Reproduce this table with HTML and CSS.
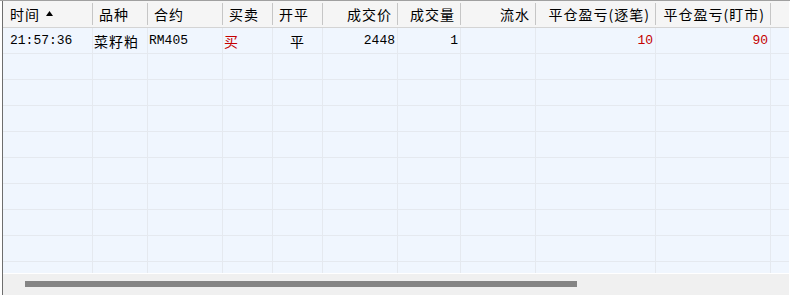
FILE: index.html
```html
<!DOCTYPE html>
<html lang="zh-CN">
<head>
<meta charset="utf-8">
<title>成交记录</title>
<link rel="stylesheet" href="styles.css">
</head>
<body>
<div class="frame">
  <div class="grid">
    <div class="head">
      <div class="hc w1 first">时间<svg class="sort" width="7" height="5" viewBox="0 0 7 5"><polygon points="3.5,0 7,5 0,5" fill="#000"/></svg></div>
      <div class="hc w2">品种</div>
      <div class="hc w3">合约</div>
      <div class="hc w4">买卖</div>
      <div class="hc w5">开平</div>
      <div class="hc w6 r">成交价</div>
      <div class="hc w7 r">成交量</div>
      <div class="hc w8 r">流水</div>
      <div class="hc w9 r">平仓盈亏(逐笔)</div>
      <div class="hc w10 r">平仓盈亏(盯市)</div>
      <div class="hfill"></div>
    </div>
    <div class="body">
      <div class="row">
        <div class="c w1 time">21:57:36</div>
        <div class="c w2 cjk">菜籽粕</div>
        <div class="c w3">RM405</div>
        <div class="c w4 cjk red">买</div>
        <div class="c w5 cjk mid">平</div>
        <div class="c w6 num">2448</div>
        <div class="c w7 num">1</div>
        <div class="c w8 num"></div>
        <div class="c w9 num red">10</div>
        <div class="c w10 num red">90</div>
        <div class="fill"></div>
      </div>
      <div class="row"><div class="c w1"></div><div class="c w2"></div><div class="c w3"></div><div class="c w4"></div><div class="c w5"></div><div class="c w6"></div><div class="c w7"></div><div class="c w8"></div><div class="c w9"></div><div class="c w10"></div><div class="fill"></div></div>
      <div class="row"><div class="c w1"></div><div class="c w2"></div><div class="c w3"></div><div class="c w4"></div><div class="c w5"></div><div class="c w6"></div><div class="c w7"></div><div class="c w8"></div><div class="c w9"></div><div class="c w10"></div><div class="fill"></div></div>
      <div class="row"><div class="c w1"></div><div class="c w2"></div><div class="c w3"></div><div class="c w4"></div><div class="c w5"></div><div class="c w6"></div><div class="c w7"></div><div class="c w8"></div><div class="c w9"></div><div class="c w10"></div><div class="fill"></div></div>
      <div class="row"><div class="c w1"></div><div class="c w2"></div><div class="c w3"></div><div class="c w4"></div><div class="c w5"></div><div class="c w6"></div><div class="c w7"></div><div class="c w8"></div><div class="c w9"></div><div class="c w10"></div><div class="fill"></div></div>
      <div class="row"><div class="c w1"></div><div class="c w2"></div><div class="c w3"></div><div class="c w4"></div><div class="c w5"></div><div class="c w6"></div><div class="c w7"></div><div class="c w8"></div><div class="c w9"></div><div class="c w10"></div><div class="fill"></div></div>
      <div class="row"><div class="c w1"></div><div class="c w2"></div><div class="c w3"></div><div class="c w4"></div><div class="c w5"></div><div class="c w6"></div><div class="c w7"></div><div class="c w8"></div><div class="c w9"></div><div class="c w10"></div><div class="fill"></div></div>
      <div class="row"><div class="c w1"></div><div class="c w2"></div><div class="c w3"></div><div class="c w4"></div><div class="c w5"></div><div class="c w6"></div><div class="c w7"></div><div class="c w8"></div><div class="c w9"></div><div class="c w10"></div><div class="fill"></div></div>
      <div class="row"><div class="c w1"></div><div class="c w2"></div><div class="c w3"></div><div class="c w4"></div><div class="c w5"></div><div class="c w6"></div><div class="c w7"></div><div class="c w8"></div><div class="c w9"></div><div class="c w10"></div><div class="fill"></div></div>
      <div class="row"><div class="c w1"></div><div class="c w2"></div><div class="c w3"></div><div class="c w4"></div><div class="c w5"></div><div class="c w6"></div><div class="c w7"></div><div class="c w8"></div><div class="c w9"></div><div class="c w10"></div><div class="fill"></div></div>
    </div>
    <div class="hscroll"><div class="thumb"></div></div>
  </div>
</div>
</body>
</html>
```
FILE: styles.css
```css
html, body {
  margin: 0;
  padding: 0;
  background: #ffffff;
}

.frame {
  height: 295px;
  box-sizing: border-box;
  border-top: 1px solid #a0a0a0;
  padding-left: 2px;
  overflow: hidden;
}

.grid {
  height: 294px;
  width: 786px;
  border-left: 1px solid #6e6e6e;
  display: flex;
  flex-direction: column;
}

.head {
  height: 26px;
  flex: none;
  background: #f5f5f5;
  border-bottom: 1px solid #d4d4d4;
  display: flex;
  align-items: center;
  font-family: "Noto Sans CJK SC", "Noto Sans", sans-serif;
  font-size: 14px;
  letter-spacing: 1px;
  color: #000;
}

.hc {
  height: 22px;
  box-sizing: border-box;
  border-right: 1px solid #c6c6c6;
  display: flex;
  align-items: center;
  padding: 0 5px 0 6px;
  white-space: nowrap;
  flex: none;
  overflow: hidden;
}

.hc.first {
  padding-left: 7px;
}

.hc.r {
  justify-content: flex-end;
}

.sort {
  margin-left: 6px;
  margin-top: -2px;
}

.hfill {
  flex: 1;
}

.w1 { width: 90px; }
.w2 { width: 55px; }
.w3 { width: 75px; }
.w4 { width: 50px; }
.w5 { width: 50px; }
.w6 { width: 75px; }
.w7 { width: 63px; }
.w8 { width: 75px; }
.w9 { width: 120px; }
.w10 { width: 115px; }

.body {
  height: 245px;
  flex: none;
  overflow: hidden;
  background: #f0f6fe;
}

.row {
  height: 26px;
  box-sizing: border-box;
  border-bottom: 1px solid #e5e9ef;
  display: flex;
  font-family: "Liberation Mono", "Noto Sans CJK SC", monospace;
  font-size: 13px;
  color: #000;
}

.c {
  flex: none;
  box-sizing: border-box;
  border-right: 1px solid #e5e9ef;
  display: flex;
  align-items: center;
  padding: 0 1px;
  white-space: nowrap;
  overflow: hidden;
}

.c.time {
  padding-left: 7px;
}

.cjk {
  font-family: "Noto Sans CJK SC", sans-serif;
  font-size: 14px;
  letter-spacing: 1px;
}

.c.mid {
  justify-content: center;
}

.c.num {
  justify-content: flex-end;
  padding-right: 2px;
}

.red {
  color: #c40000;
}

.fill {
  flex: 1;
}

.hscroll {
  flex: none;
  height: 21px;
  border-top: 1px solid #ffffff;
  background: #f0f0f0;
  display: flex;
  align-items: flex-start;
}

.thumb {
  margin-top: 7px;
  margin-left: 22px;
  width: 552px;
  height: 6px;
  background: #858585;
}
```
